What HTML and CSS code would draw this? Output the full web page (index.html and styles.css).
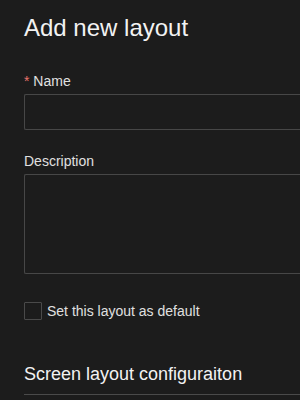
FILE: index.html
```html
<!DOCTYPE html>
<html>
<head>
<meta charset="utf-8">
<link rel="stylesheet" href="styles.css">
</head>
<body>
<div class="page">
  <h1 class="title">Add new layout</h1>
  <div class="field">
    <label class="label"><span class="req">*</span> Name</label>
    <div class="input"></div>
  </div>
  <div class="field">
    <label class="label">Description</label>
    <div class="textarea"></div>
  </div>
  <div class="check-row">
    <span class="checkbox"></span>
    <span class="check-text">Set this layout as default</span>
  </div>
  <h2 class="section">Screen layout configuraiton</h2>
</div>
</body>
</html>
```
FILE: styles.css
```css
html, body {
  margin: 0;
  padding: 0;
  background: #1c1c1c;
}
.page {
  padding: 12px 0 0 24px;
  font-family: "Liberation Sans", Arial, sans-serif;
  color: #e6e6e6;
}
.title {
  margin: 0;
  font-size: 24px;
  line-height: 32px;
  font-weight: 400;
  color: #f2f2f2;
}
.field {
  display: flex;
  flex-direction: column;
  gap: 2px;
  margin-top: 26px;
}
.field + .field {
  margin-top: 20px;
}
.label {
  font-size: 14px;
  line-height: 22px;
  color: #e0e0e0;
}
.req {
  color: #e8736c;
}
.input {
  height: 34px;
  border: 1px solid #474747;
  border-right: none;
  border-radius: 2px 0 0 2px;
  background: #1c1c1c;
}
.textarea {
  height: 98px;
  border: 1px solid #474747;
  border-right: none;
  border-radius: 2px 0 0 2px;
  background: #1c1c1c;
}
.check-row {
  display: flex;
  align-items: center;
  gap: 5px;
  margin-top: 28px;
  height: 18px;
}
.checkbox {
  width: 16px;
  height: 16px;
  border: 1px solid #4a4a4a;
  border-radius: 1px;
  box-sizing: content-box;
}
.check-text {
  font-size: 14px;
  line-height: 22px;
  color: #e0e0e0;
}
.section {
  margin: 41px 0 0;
  font-size: 18px;
  line-height: 26px;
  font-weight: 400;
  color: #f2f2f2;
  padding-bottom: 7px;
  border-bottom: 1px solid #4a4a4a;
}
```
